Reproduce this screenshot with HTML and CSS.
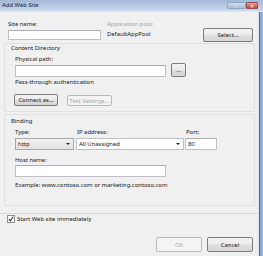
FILE: index.html
```html
<!DOCTYPE html>
<html>
<head>
<meta charset="utf-8">
<link rel="stylesheet" href="styles.css">
</head>
<body>
<div class="window">
  <div class="titlebar">
    <span class="title">Add Web Site</span>
    <div class="caption-btns">
      <span class="cbtn help">?</span>
      <span class="cbtn close">&#x2715;</span>
    </div>
  </div>
  <div class="main">
    <div class="content">
      <div class="row1">
        <div class="site-col">
          <div class="label">Site name:</div>
          <div class="input site-input"></div>
        </div>
        <div class="app-col">
          <div class="label disabled-text">Application pool:</div>
          <div class="label pool-value">DefaultAppPool</div>
        </div>
        <div class="btn select-btn">Select...</div>
      </div>

      <div class="group group1">
        <div class="label group-title">Content Directory</div>
        <div class="group-inner">
          <div class="label pp-label">Physical path:</div>
          <div class="path-row">
            <div class="input path-input"></div>
            <div class="btn dots-btn">...</div>
          </div>
          <div class="label pass-label">Pass-through authentication</div>
          <div class="btn-row">
            <div class="btn connect-btn">Connect as...</div>
            <div class="btn disabled test-btn">Test Settings...</div>
          </div>
        </div>
      </div>

      <div class="group group2">
        <div class="label group-title binding-title">Binding</div>
        <div class="group-inner">
          <div class="bind-labels">
            <div class="label type-col">Type:</div>
            <div class="label ip-col ip-label">IP address:</div>
            <div class="label port-col port-label">Port:</div>
          </div>
          <div class="bind-fields">
            <div class="combo type-col type-combo"><span class="combo-text">http</span><span class="arrow"></span></div>
            <div class="combo ip-col ip-combo"><span class="combo-text">All Unassigned</span><span class="arrow"></span></div>
            <div class="input port-col port-input"><span class="combo-text">80</span></div>
          </div>
          <div class="label host-label">Host name:</div>
          <div class="input host-input"></div>
          <div class="label example">Example: www.contoso.com or marketing.contoso.com</div>
        </div>
      </div>

      <div class="separator"></div>

      <div class="check-row">
        <svg class="checkbox" width="8" height="8" viewBox="0 0 8 8">
          <rect x="0.5" y="0.5" width="7" height="7" fill="#fdfdfd" stroke="#8f8f8f"/>
          <path d="M1.8 4.2 L3.3 5.8 L6.2 1.8" fill="none" stroke="#2a3a55" stroke-width="1.1"/>
        </svg>
        <span class="label">Start Web site immediately</span>
      </div>

      <div class="footer">
        <div class="btn disabled ok-btn">OK</div>
        <div class="btn cancel-btn">Cancel</div>
      </div>
    </div>
    <div class="frame-right"></div>
  </div>
</div>
</body>
</html>
```
FILE: styles.css
```css
* { box-sizing: border-box; }
html, body { margin: 0; padding: 0; }
body {
  width: 263px;
  height: 256px;
  overflow: hidden;
  background: #f0f0f0;
  font-family: "Noto Sans", "Open Sans", sans-serif;
  font-size: 5.9px;
  color: #161616;
}
.window {
  width: 263px;
  height: 256px;
  display: flex;
  flex-direction: column;
}
.titlebar {
  height: 12px;
  flex: none;
  display: flex;
  align-items: flex-start;
  justify-content: space-between;
  background: linear-gradient(#a3b9d6 0px, #b6c9e1 6px, #c6d5e9 10px, #e4ebf4 12px);
}
.title {
  padding-left: 2px;
  line-height: 10px;
  color: #14233a;
}
.caption-btns {
  display: flex;
  margin-top: 2px;
  margin-right: 5px;
}
.cbtn {
  height: 7px;
  line-height: 6px;
  text-align: center;
  font-size: 4.5px;
  color: #fff;
  border-radius: 1px;
}
.help {
  width: 19px;
  background: linear-gradient(#cfdcec, #a9bdd8);
  color: #eef3f9;
  border: 1px solid #8fa6c4;
}
.close {
  width: 12px;
  background: linear-gradient(#e4a49a, #c8473a);
  border: 1px solid #9b4a44;
}
.main {
  flex: 1;
  display: flex;
  min-height: 0;
}
.content {
  flex: 1;
  padding: 0 3px 0 4px;
  display: flex;
  flex-direction: column;
}
.frame-right {
  width: 5px;
  flex: none;
  background: linear-gradient(90deg, #d8e2ee 0px, #d8e2ee 1px, #4f75a6 1px, #4f75a6 2px, #7ea2cc 2px, #9dbade 5px);
}
.label {
  line-height: 8px;
  height: 8px;
  white-space: nowrap;
}
.disabled-text { color: #a3a3a3; }
.input {
  background: #fff;
  border: 1px solid #bdc0c6;
  border-top-color: #abaeb5;
}
.btn {
  text-align: center;
  border: 1px solid #7c7c7c;
  border-radius: 2px;
  background: linear-gradient(#f4f4f4 0%, #ececec 45%, #dedede 55%, #d6d6d6 100%);
  color: #161616;
  display: flex;
  align-items: center;
  justify-content: center;
  white-space: nowrap;
}
.btn.disabled {
  border-color: #b6b9bc;
  background: #f4f4f4;
  color: #a8a8a8;
}

/* row 1 */
.row1 {
  margin-top: 8px;
  padding: 0 2px 0 4px;
  display: flex;
  align-items: flex-start;
}
.site-col { width: 93px; }
.site-input { margin-top: 2px; height: 10px; }
.app-col { margin-left: 6px; }
.pool-value { margin-top: 2px; }
.select-btn {
  margin-left: auto;
  margin-top: 8px;
  width: 50px;
  height: 14px;
}

/* groups */
.group {
  border: 1px solid #e0e0e0;
  border-radius: 1px;
}
.group1 { margin-top: 1px; padding-bottom: 5px; }
.group-title { margin-left: 6px; }
.group-inner { padding-left: 10px; }
.pp-label { margin-top: 3px; }
.path-row {
  display: flex;
  align-items: flex-end;
  height: 14px;
}
.path-input { width: 151px; height: 12px; }
.dots-btn { margin-left: 5px; width: 15px; height: 14px; }
.pass-label { margin-top: 1px; }
.btn-row {
  margin-top: 8px;
  display: flex;
  align-items: flex-end;
  margin-left: -1px;
}
.connect-btn { width: 44px; height: 12px; }
.test-btn { margin-left: 9px; width: 45px; height: 11px; }

.group2 { margin-top: 2px; padding-bottom: 16px; }
.binding-title { margin-top: 2px; }
.bind-labels, .bind-fields { display: flex; }
.bind-labels { margin-top: 3px; }
.bind-fields { margin-top: 2px; height: 12px; }
.type-col { width: 59px; }
.ip-col { width: 108px; margin-left: 2px; }
.port-col { width: 32px; margin-left: 1px; }
.ip-label, .port-label { padding-left: 1px; }
.combo {
  height: 12px;
  display: flex;
  align-items: center;
  border: 1px solid #bdc0c6;
  background: #fff;
}
.type-combo {
  background: linear-gradient(#f2f2f2, #e2e2e2);
  border-color: #a8a8a8;
}
.combo-text { flex: 1; padding-left: 2px; line-height: 10px; }
.port-input { display: flex; align-items: center; }
.arrow {
  width: 0;
  height: 0;
  margin-right: 3px;
  border-left: 2px solid transparent;
  border-right: 2px solid transparent;
  border-top: 2px solid #222;
}
.host-label { margin-top: 6px; }
.host-input { margin-top: 1px; width: 151px; height: 12px; }
.example { margin-top: 4px; }

.separator {
  margin: 7px -3px 0 -4px;
  height: 1px;
  background: #d9d9d9;
}
.check-row {
  margin-top: 1px;
  margin-left: 3px;
  display: flex;
  align-items: center;
  height: 8px;
}
.checkbox { display: block; flex: none; }
.check-row .label { margin-left: 2px; }
.footer {
  margin-top: 14px;
  padding-right: 2px;
  display: flex;
  justify-content: flex-end;
}
.ok-btn, .cancel-btn { width: 46px; height: 15px; }
.cancel-btn { margin-left: 5px; }
```
